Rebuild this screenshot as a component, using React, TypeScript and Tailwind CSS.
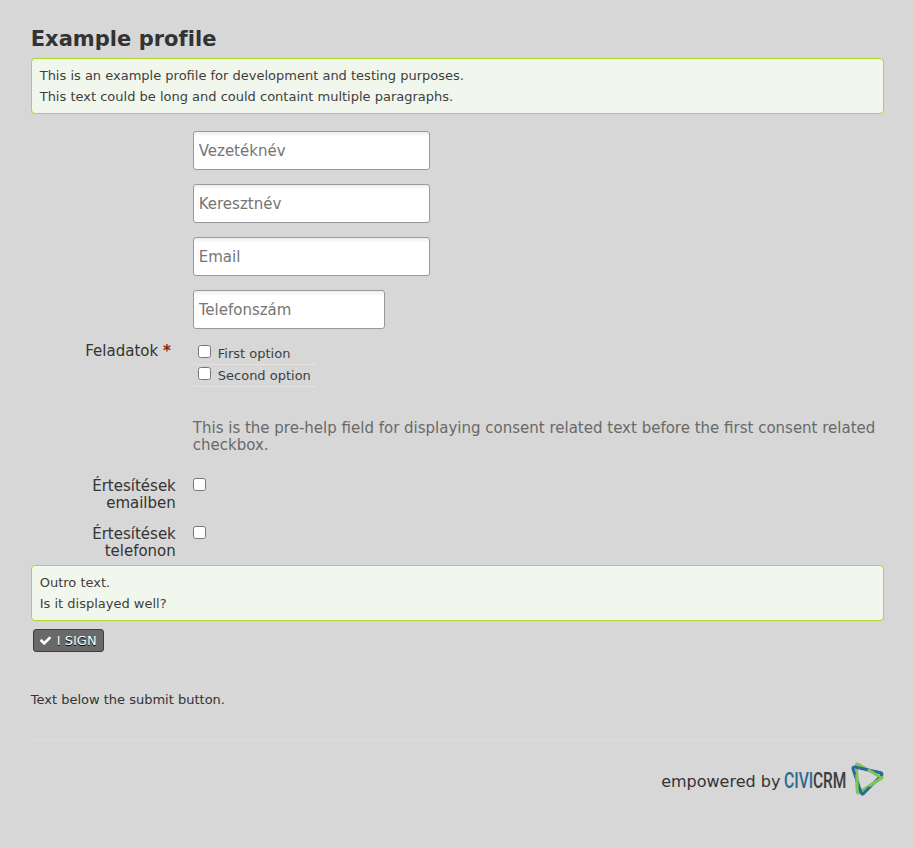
import React from "react";

function HelpBox({ lines }: { lines: string[] }) {
  return (
    <div className="h-14 rounded-[4px] border border-[#aed62f] bg-[#f1f7ec] pt-[6px] pl-[7.7px] text-[13px] leading-[21px] text-[#3e3e3e]">
      {lines.map((line) => (
        <p key={line}>{line}</p>
      ))}
    </div>
  );
}

function Field({ label, width }: { label: string; width: string }) {
  return (
    <input
      type="text"
      placeholder={label}
      className={`block h-[39px] rounded-[3px] border border-[#999] bg-white bg-[linear-gradient(#eeeeee,#ffffff_5px)] px-[4.7px] text-[15px] placeholder:text-[#757575] ${width}`}
    />
  );
}

function Option({ label }: { label: string }) {
  return (
    <label className="flex h-[22px] items-start border-b border-[#e4e4dc] pl-[5px] text-[13px] leading-[21px] text-[#3e3e3e]">
      <input type="checkbox" className="mt-[2px] mr-[6.8px] size-[13px]" />
      <span>{label}</span>
    </label>
  );
}

function Consent({ lines }: { lines: string[] }) {
  return (
    <div className="flex h-12 items-start">
      <div className="mt-px w-[144.8px] text-right text-[15px] leading-[17px] text-[#333]">
        {lines.map((line) => (
          <div key={line}>{line}</div>
        ))}
      </div>
      <input type="checkbox" className="mt-px ml-[17.2px] size-[13px]" />
    </div>
  );
}

function CiviLogo() {
  return (
    <svg width="100" height="36" viewBox="0 0 100 36" className="shrink-0">
      <g fontFamily="Roboto, sans-serif" fontSize="22" fontWeight="500">
        <text transform="translate(0 27) scale(0.715 1)" fill="#2c6a92">CIVI</text>
        <text transform="translate(29 27) scale(0.705 1)" fill="#3e3e3e">CRM</text>
      </g>
      <g fill="none" strokeWidth="3" strokeLinejoin="round" strokeLinecap="round">
        <path d="M74.3 3.2 L98 16.7 L75 31.5 Q73.3 32.5 73.3 30.5 L72.5 4.5 Q72.5 2.2 74.3 3.2 Z" stroke="#81c459" />
        <path d="M71 6 L96.5 11.7 Q98.8 12.5 97.3 14.5 L79.5 32.5 Q78 33.8 77.2 32 L69 8 Q68.6 5.6 71 6 Z" stroke="#2c6a92" />
        <path d="M85 9.2 L98 16.7 L86 24.5 M73.2 28 L72.8 14" stroke="#81c459" />
        <path d="M92 10.7 L96.5 11.7 Q98.8 12.5 97.3 14.2" stroke="#2c6a92" strokeWidth="2.4" />
      </g>
    </svg>
  );
}

export default function App() {
  return (
    <main className="flex h-[848px] w-[914px] flex-col bg-[#d7d7d7] pt-[26px] pr-[30px] pl-[31px] font-['DejaVu_Sans',sans-serif] text-[#333]">
      <h1 className="-ml-[0.3px] h-8 pt-px text-[21px] leading-[25px] font-bold tracking-[0.03px]">Example profile</h1>
      <HelpBox
        lines={[
          "This is an example profile for development and testing purposes.",
          "This text could be long and could containt multiple paragraphs.",
        ]}
      />
      <div className="mt-[17px] ml-[162px] flex flex-col gap-[14px]">
        <Field label="Vezetéknév" width="w-[237px]" />
        <Field label="Keresztnév" width="w-[237px]" />
        <Field label="Email" width="w-[237px]" />
        <Field label="Telefonszám" width="w-[192px]" />
      </div>
      <div className="mt-[14px] flex h-[76px] items-start">
        <div className="w-[139.8px] text-right text-[15px] leading-[17px]">
          Feladatok <span className="font-bold text-[#8a1f11]">*</span>
        </div>
        <div className="ml-[22.2px] w-[123px]">
          <Option label="First option" />
          <Option label="Second option" />
        </div>
      </div>
      <p className="ml-[161.8px] h-[58px] pt-px text-[15px] leading-[17px] text-[#696969]">
        This is the pre-help field for displaying consent related text before the first consent related checkbox.
      </p>
      <Consent lines={["Értesítések", "emailben"]} />
      <Consent lines={["Értesítések", "telefonon"]} />
      <div className="-mt-[8px]">
        <HelpBox lines={["Outro text.", "Is it displayed well?"]} />
      </div>
      <button className="mt-2 ml-[2px] flex h-[23px] w-[71px] items-center rounded-[3px] border border-[#3e3e3e] bg-[#696969] pl-[5.4px] text-[13px] text-white [text-shadow:0_1px_0_black]">
        <svg width="13" height="13" viewBox="0 0 1792 1792" className="mr-[4.4px]">
          <path
            fill="white"
            d="M1671 566q0 40-28 68l-724 724-136 136q-28 28-68 28t-68-28l-136-136-362-362q-28-28-28-68t28-68l136-136q28-28 68-28t68 28l294 295 656-657q28-28 68-28t68 28l136 136q28 28 28 68z"
          />
        </svg>
        <span className="whitespace-nowrap">I SIGN</span>
      </button>
      <p className="mt-[37px] -ml-[0.3px] h-[51px] text-[13px] leading-[21px]">Text below the submit button.</p>
      <footer className="flex items-center justify-end border-t border-[#dedede] pt-[20px] text-[16px]">
        <span className="mt-[6px] mr-[3.6px]">empowered by</span>
        <CiviLogo />
      </footer>
    </main>
  );
}
